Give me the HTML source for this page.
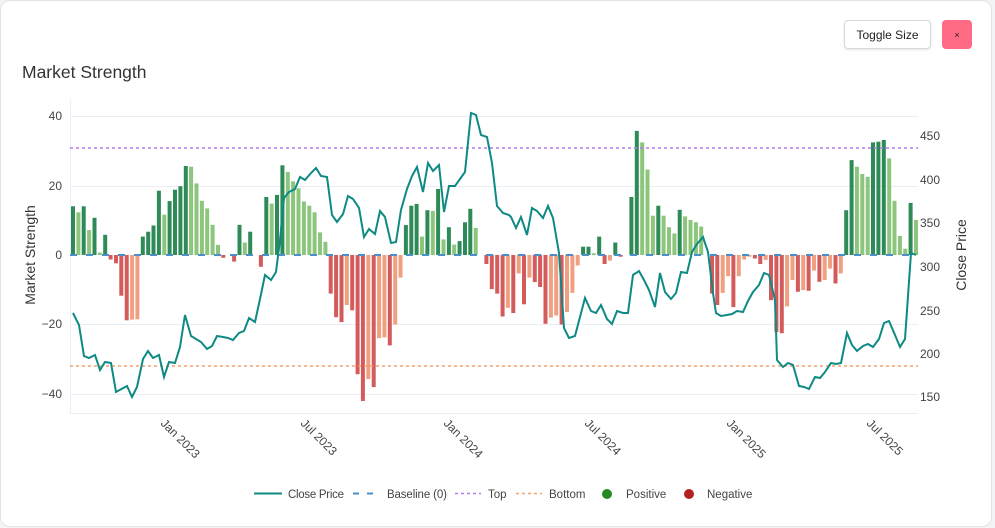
<!DOCTYPE html>
<html><head><meta charset="utf-8"><style>
html,body{margin:0;padding:0;background:#f3f4f6;width:995px;height:528px;overflow:hidden;font-family:"Liberation Sans",sans-serif}
.card{position:absolute;left:0;top:0;width:992px;height:527px;background:#fff;border:1px solid #e3e3e3;border-radius:10px;box-sizing:border-box}
.btn{position:absolute;top:20px;height:29px;box-sizing:border-box;border-radius:4px;font-size:12px;display:flex;align-items:center;justify-content:center;color:#222}
.t{left:844px;width:87px;border:1px solid #d5d8dc;background:#fff;box-shadow:0 1px 2px rgba(0,0,0,.1)}
.x{left:942px;width:30px;background:#ff6b85;font-size:9px}
h1{position:absolute;left:22px;top:62px;margin:0;font-weight:normal;font-size:17.5px;color:#333}
svg{position:absolute;left:0;top:0}
</style></head><body>
<div class="card"></div>
<div class="btn t">Toggle Size</div>
<div class="btn x">×</div>
<h1>Market Strength</h1>
<svg id="s" width="995" height="528" font-family="Liberation Sans, sans-serif" font-size="12" fill="#444">
<g stroke="#e9edf5" stroke-width="1">
<line x1="70" x2="918" y1="116.5" y2="116.5"/><line x1="70" x2="918" y1="186.5" y2="186.5"/><line x1="70" x2="918" y1="324.5" y2="324.5"/><line x1="70" x2="918" y1="394.5" y2="394.5"/>
<line x1="70.5" x2="70.5" y1="100" y2="413"/><line x1="70" x2="918" y1="413.5" y2="413.5"/>
</g>
<g text-anchor="end"><text x="62" y="120">40</text><text x="62" y="190">20</text><text x="62" y="259">0</text><text x="62" y="328">−20</text><text x="62" y="398">−40</text></g>
<g><text x="920" y="140">450</text><text x="920" y="184">400</text><text x="920" y="227">350</text><text x="920" y="271">300</text><text x="920" y="315">250</text><text x="920" y="358">200</text><text x="920" y="401">150</text></g>
<text transform="translate(35,255) rotate(-90)" text-anchor="middle" font-size="14" fill="#333">Market Strength</text>
<text transform="translate(966,255) rotate(-90)" text-anchor="middle" font-size="14" fill="#333">Close Price</text>
<g id="bars"></g>
<line x1="70" x2="918" y1="255" y2="255" stroke="#4a8fc9" stroke-width="2" stroke-dasharray="7,9"/>
<line x1="70" x2="918" y1="148" y2="148" stroke="#b57af0" stroke-width="1.5" stroke-dasharray="3,3"/>
<line x1="70" x2="918" y1="366" y2="366" stroke="#f5a26b" stroke-width="1.5" stroke-dasharray="3,3"/>
<polyline id="pl" fill="none" stroke="#0e8a84" stroke-width="2" points="73,313 79,325 84,356 89,358 95,355 100,370 105,362 111,363 116,392 127,386 132,397 137,387 143,359 148,351 153,358 159,355 164,377 169,362 175,363 180,347 185,315 191,336 196,339 201,342 207,349 212,346 217,336 223,337 228,338 233,340 239,333 244,331 249,318 255,322 260,299 265,275 271,280 276,272 280,240 284,198 289,192 295,189 300,177 305,180 311,173 316,168 321,176 327,177 332,215 337,222 343,214 348,196 353,199 359,208 364,237 369,229 375,234 380,211 385,217 391,243 396,242 401,210 407,189 412,176 417,167 423,192 428,163 433,171 439,165 444,212 449,186 455,186 460,179 465,172 471,113 476,115 481,135 487,137 492,163 497,206 503,213 509,215 511,217 516,228 521,217 527,235 532,208 537,211 543,218 548,206 553,218 559,253 564,328 569,338 575,336 580,317 585,298 591,311 596,313 601,305 607,319 612,324 617,311 623,313 628,313 633,275 639,271 644,280 649,290 655,307 660,273 665,292 671,299 676,293 681,272 687,273 692,252 697,244 703,237 708,252 713,293 716,313 721,316 727,315 732,314 737,311 743,312 748,301 753,292 759,285 764,273 769,275 775,300 777,360 783,367 788,363 793,365 799,386 804,387 809,389 815,377 820,378 825,372 831,363 836,364 841,363 847,333 852,345 857,351 863,346 868,344 873,347 879,339 884,323 889,321 895,335 900,347 905,339 911,253 916,255"/>
<g font-size="12" fill="#444">
<text transform="translate(160,424) rotate(45)">Jan 2023</text>
<text transform="translate(300,424) rotate(45)">Jul 2023</text>
<text transform="translate(443,424) rotate(45)">Jan 2024</text>
<text transform="translate(584,424) rotate(45)">Jul 2024</text>
<text transform="translate(726,424) rotate(45)">Jan 2025</text>
<text transform="translate(866,424) rotate(45)">Jul 2025</text>
</g>
<g font-size="11.5" fill="#444">
<line x1="254" x2="282" y1="493.5" y2="493.5" stroke="#0e8a84" stroke-width="2"/><text x="288" y="498" textLength="56">Close Price</text>
<line x1="353" x2="380" y1="493.5" y2="493.5" stroke="#4a8fc9" stroke-width="2" stroke-dasharray="6,8"/><text x="387" y="498" textLength="60">Baseline (0)</text>
<line x1="455" x2="481" y1="493.5" y2="493.5" stroke="#b57af0" stroke-width="1.5" stroke-dasharray="3,3"/><text x="488" y="498">Top</text>
<line x1="516" x2="542" y1="493.5" y2="493.5" stroke="#f5a26b" stroke-width="1.5" stroke-dasharray="3,3"/><text x="549" y="498">Bottom</text>
<circle cx="607" cy="494" r="5" fill="#228b22"/><text x="626" y="498">Positive</text>
<circle cx="689" cy="494" r="5" fill="#b22222"/><text x="707" y="498">Negative</text>
</g>
</svg>
<script>
(function(){
var v=[14,12.3,14,7.2,10.7,0.7,5.8,-1.3,-2.4,-11.7,-18.8,-18.6,-18.5,5.3,6.7,8.5,18.5,11.6,15.5,18.8,19.8,25.6,25.4,20.6,15.6,13.4,8.7,2.9,-0.8,0,-1.9,8.7,3.6,6.7,0,-3.4,16.7,14.8,17.3,25.8,23.9,21.2,19.2,15.4,14.2,12.3,6.5,3.8,-11.1,-17.9,-19.3,-14.4,-15.9,-34.3,-42,-35.7,-38,-23.9,-23.7,-26,-20,-6.5,8.6,14.2,14.7,5.3,12.9,12.7,19,4.5,8,3,4,9.4,13.3,7.8,0,-2.6,-9.8,
-11.1,-17.7,-15.2,-16.7,-5.3,-14.2,-6.5,-7.8,-9.2,-19.8,-18,-17.4,-20,-16.4,-10.9,-3,2.4,2.4,0.5,5.3,-2.6,-1.6,3.6,-0.5,0,16.7,35.7,32.4,24.6,11.3,14.2,11.3,8,6.2,13,11.1,10.1,9.4,8.2,0,-11.1,-14.4,-10.9,-6.1,-15,-6.1,-1.3,-0.5,-1,-2.6,-1.4,-13,-22.2,-22.5,-14.8,-7.2,-10.6,-10.1,-10.3,-4.5,-7.7,-7.2,-3.9,-8.2,-5.3,12.9,27.3,25.4,23.3,22.5,32.4,32.6,33.1,27.8,15.6,5.5,1.8,15,10.1];
var n=v.length,x0=73,x1=916,st=(x1-x0)/(n-1),h='',p=0;
for(var i=0;i<n;i++){var a=v[i],c;if(a===0){p=a;continue}
if(a>0)c=(a>=p)?'#2e8b57':'#8cc57c';else c=(a<p)?'#d45b5b':'#f0a080';
var yy=255-a*3.475,tp=Math.min(yy,255),hh=Math.abs(a*3.475);
h+='<rect x="'+(x0+i*st-2).toFixed(1)+'" y="'+tp.toFixed(1)+'" width="4" height="'+hh.toFixed(1)+'" fill="'+c+'"/>';p=a;}
document.getElementById('bars').innerHTML=h;
})();
</script>
</body></html>
